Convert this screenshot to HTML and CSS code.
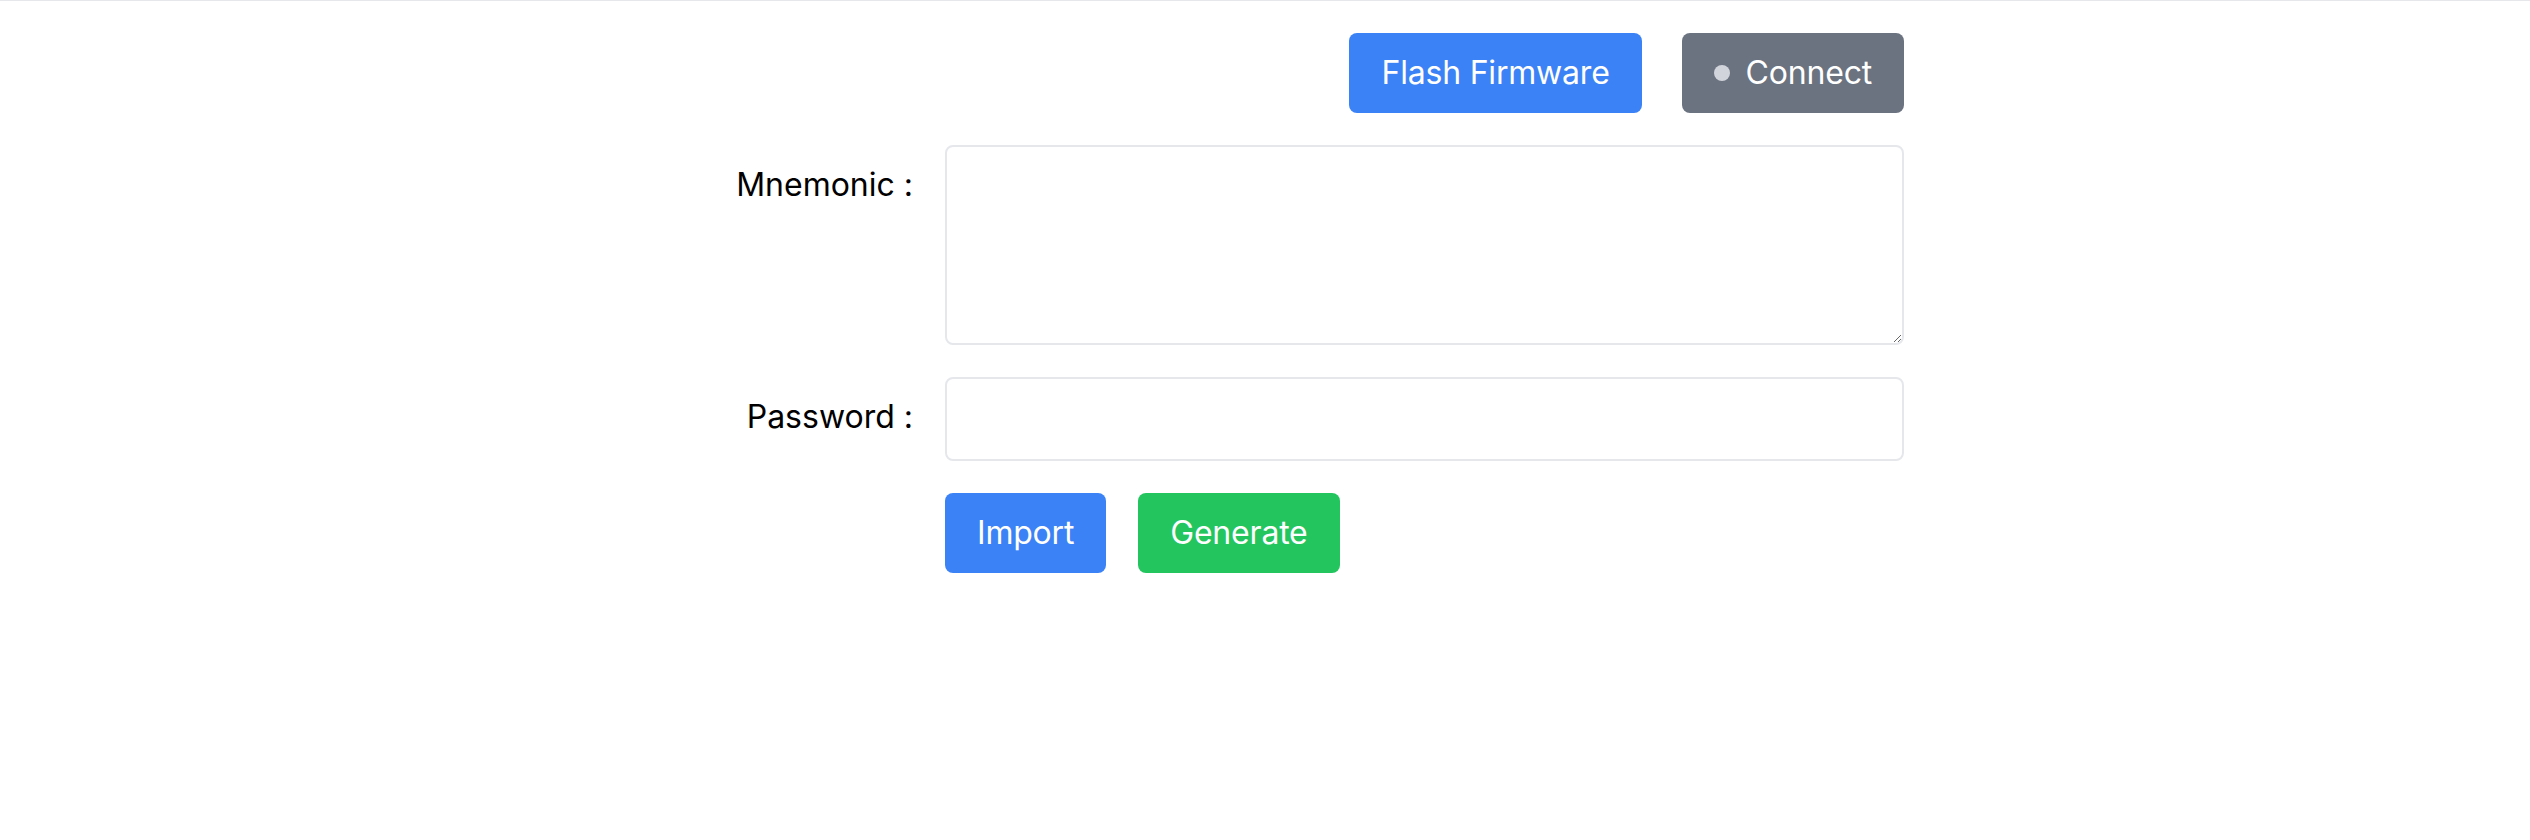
FILE: index.html
```html
<!DOCTYPE html>
<html lang="en">
<head>
<meta charset="utf-8">
<title>Wallet</title>
<link rel="stylesheet" href="styles.css">
</head>
<body>
<main class="container">
  <div class="toolbar">
    <button class="btn btn-blue">Flash Firmware</button>
    <button class="btn btn-gray"><span class="dot"></span>Connect</button>
  </div>
  <div class="form">
    <label class="label" for="mnemonic">Mnemonic :</label>
    <textarea id="mnemonic" class="field textarea"></textarea>
    <label class="label" for="password">Password :</label>
    <input id="password" class="field input" type="password">
    <div></div>
    <div class="actions">
      <button class="btn btn-blue">Import</button>
      <button class="btn btn-green">Generate</button>
    </div>
  </div>
</main>
</body>
</html>
```

FILE: styles.css
```css
html, body {
  margin: 0;
  padding: 0;
  background: #ffffff;
}
body {
  font-family: Inter, "Noto Sans", "Liberation Sans", sans-serif;
  font-size: 32px;
  line-height: 48px;
  color: #000000;
  border-top: 1px solid #e5e7eb;
}
.container {
  width: 1278px;
  margin: 0 auto;
  padding-top: 32px;
}
.toolbar {
  display: flex;
  justify-content: flex-end;
  gap: 40px;
}
.btn {
  font-family: inherit;
  font-size: 32px;
  line-height: 48px;
  letter-spacing: -0.2px;
  padding: 16px 32px;
  border: 0;
  border-radius: 8px;
  color: #ffffff;
  display: inline-flex;
  align-items: center;
  cursor: pointer;
}
.btn-blue { background: #3b82f6; }
.btn-gray { background: #6b7280; }
.btn-green { background: #22c55e; }
.dot {
  width: 16px;
  height: 16px;
  border-radius: 50%;
  background: #d1d5db;
  margin-right: 16px;
}
.form {
  display: grid;
  grid-template-columns: 287px 1fr;
  column-gap: 32px;
  row-gap: 32px;
  margin-top: 32px;
}
.label {
  text-align: right;
  padding-top: 16px;
}
.field {
  box-sizing: border-box;
  width: 100%;
  border: 2px solid #e5e7eb;
  border-radius: 8px;
  font-family: inherit;
  font-size: 32px;
  padding: 16px;
  margin: 0;
  outline: none;
  background: #ffffff;
}
.textarea {
  display: block;
  height: 200px;
}
.input {
  height: 84px;
}
.actions {
  display: flex;
  gap: 32px;
}
```
